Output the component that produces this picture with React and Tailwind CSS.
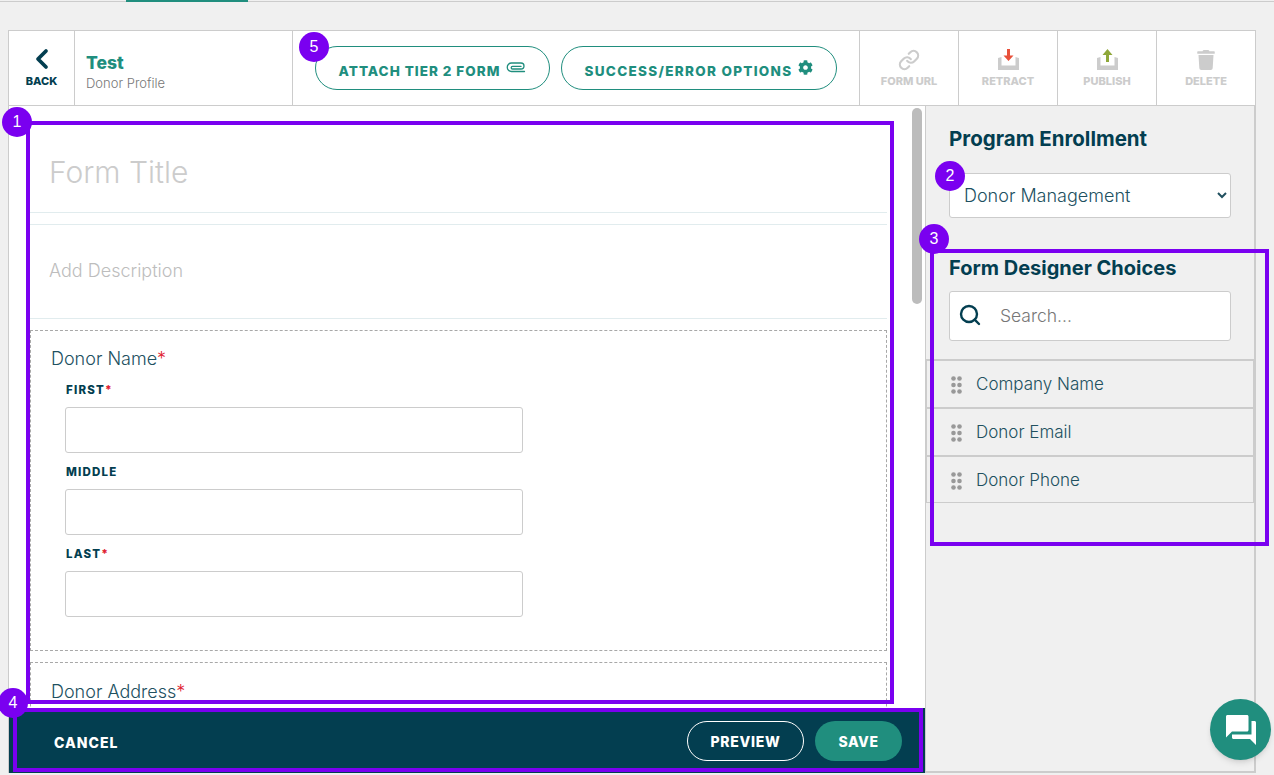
import { ChevronLeft, Search, Link } from 'lucide-react';
import { FaCog, FaTrash } from 'react-icons/fa';
import { MdQuestionAnswer } from 'react-icons/md';

const PaperclipIcon = () => (
  <svg width="20" height="12" viewBox="0 0 20 12" fill="none" stroke="currentColor" strokeWidth="1.3" strokeLinecap="round" className="-mt-[8px]">
    <path d="M18.5 9.5H5.500a4 4 0 0 1 0-8.500h9.500a3 3 0 0 1 0 6H6.500a1.200 1.200 0 0 1 0-2.600H15" />
  </svg>
);

const TrayIcon = ({ arrow, down }) => (
  <svg width="21" height="21" viewBox="0 0 21 21">
    <path d="M0 9l3.500-1v8.500h14V8l3.500 1v12H0z" fill="#cccccc" />
    {down ? (
      <path d="M9 0h3v6.500h3.500L10.500 12 5.500 6.500H9z" fill={arrow} />
    ) : (
      <path d="M9 13h3V6h3.500L10.500 0 5.500 6H9z" fill={arrow} />
    )}
  </svg>
);

const DragDots = () => (
  <svg width="11" height="18" viewBox="0 0 11 18" fill="#999999">
    <circle cx="2.500" cy="2.500" r="2.300" />
    <circle cx="8.500" cy="2.500" r="2.300" />
    <circle cx="2.500" cy="9" r="2.300" />
    <circle cx="8.500" cy="9" r="2.300" />
    <circle cx="2.500" cy="15.500" r="2.300" />
    <circle cx="8.500" cy="15.500" r="2.300" />
  </svg>
);

function ToolAction({ icon, label }) {
  return (
    <div className="w-[99px] flex flex-col items-center border-l border-[#cccccc] pt-[17px]">
      <div className="h-[23px] flex items-center justify-center">{icon}</div>
      <span className="mt-[3px] text-[11px] leading-[14px] font-extrabold text-[#cccccc]">{label}</span>
    </div>
  );
}

function NameField({ label, required }) {
  return (
    <div className="mb-[10px]">
      <div className="h-[18px] pl-px text-[11.500px] leading-[18px] font-extrabold tracking-[1.200px] text-[#033e50]">
        {label}
        {required && <span className="text-[#e0202f]">*</span>}
      </div>
      <input className="block mt-[8px] w-[458px] h-[46px] bg-white border border-[#cccccc] rounded-[3px]" />
    </div>
  );
}

function Choice({ label }) {
  return (
    <div className="h-[48px] flex items-center pl-[24px] pt-[1px] last:pt-[2px] border-x border-t-2 last:border-b border-[#cccccc]">
      <DragDots />
      <span className="ml-[14px] text-[17px] font-light text-[#21505f]">{label}</span>
    </div>
  );
}

function Badge({ n, className }) {
  return (
    <div className={`absolute w-[30px] h-[30px] rounded-full bg-[#7a00f0] text-white text-[16px] flex items-center justify-center font-['Liberation_Sans',sans-serif] ${className}`}>
      {n}
    </div>
  );
}

export default function App() {
  return (
    <div className="relative w-[1274px] h-[775px] overflow-hidden bg-[#f0f0f0] font-['Inter',sans-serif]">
      {/* top tab strip */}
      <div className="flex h-[2px] border-b border-[#cccccc]">
        <div className="w-[126px]" />
        <div className="w-[122px] h-[2px] bg-[#208e7e]" />
      </div>

      <div className="pl-[8px] pt-[28px] w-[1256px]">
        {/* toolbar */}
        <div className="flex h-[76px] bg-white border border-[#cccccc]">
          <div className="w-[65px] flex flex-col items-center pt-[12px] text-[#033e50]">
            <ChevronLeft size={32} strokeWidth={2.800} />
            <span className="text-[11px] leading-[14px] font-extrabold mt-[-1px]">BACK</span>
          </div>
          <div className="w-[218px] border-l border-[#cccccc] pl-[11px] pt-[21px]">
            <div className="text-[17.500px] leading-[22px] font-extrabold text-[#208e7e]">Test</div>
            <div className="text-[13px] leading-[18px] font-light text-[#777777]">Donor Profile</div>
          </div>
          <div className="flex-1 border-l border-[#cccccc] pl-[22px] pt-[15px] flex gap-[11px]">
            <button className="w-[235px] h-[44px] pt-[7px] rounded-[22px] border border-[#208e7e] flex items-center justify-center gap-[6px] text-[13.500px] font-extrabold tracking-[1px] text-[#208e7e]">
              ATTACH TIER 2 FORM <PaperclipIcon />
            </button>
            <button className="w-[276px] h-[44px] pt-[7px] rounded-[22px] border border-[#208e7e] flex items-center justify-center gap-[6px] text-[13.500px] font-extrabold tracking-[1.300px] text-[#208e7e]">
              SUCCESS/ERROR OPTIONS <FaCog size={15} className="-mt-[8px]" />
            </button>
          </div>
          <ToolAction label="FORM URL" icon={<Link size={22} strokeWidth={2.400} className="text-[#cccccc]" />} />
          <ToolAction label="RETRACT" icon={<TrayIcon arrow="#e8503a" down />} />
          <ToolAction label="PUBLISH" icon={<TrayIcon arrow="#8fa83a" />} />
          <ToolAction label="DELETE" icon={<FaTrash size={20} className="text-[#cccccc]" />} />
        </div>

        <div className="flex h-[667px]">
          {/* form column */}
          <div className="w-[917px] flex flex-col border-l border-[#cccccc]">
            <div className="h-[602px] bg-white overflow-hidden flex pl-[21px]">
              <div className="w-[857px] shrink-0">
                <div className="h-[107px] pt-[27px] pl-[19px] flex items-center border-b border-[#e1ecee] text-[30px] font-light text-[#cccccc]">
                  Form Title
                </div>
                <div className="mt-[11px] h-[95px] pb-[3px] flex items-center pl-[19px] border-y border-[#e1ecee] text-[18px] font-light text-[#bdbdbd]">
                  Add Description
                </div>
                <div className="mt-[11px] h-[321px] border border-dashed border-[#a8a8a8] pl-[20px] pt-[17px]">
                  <div className="text-[18px] leading-[22px] font-light text-[#21505f]">
                    Donor Name<span className="text-[#e0202f]">*</span>
                  </div>
                  <div className="pl-[14px] mt-[11px]">
                    <NameField label="FIRST" required />
                    <NameField label="MIDDLE" />
                    <NameField label="LAST" required />
                  </div>
                </div>
                <div className="mt-[11px] h-[60px] border border-dashed border-[#a8a8a8] pl-[20px] pt-[18px]">
                  <div className="text-[18px] leading-[22px] font-light text-[#21505f]">
                    Donor Address<span className="text-[#e0202f]">*</span>
                  </div>
                </div>
              </div>
              {/* scrollbar */}
              <div className="ml-[25px] mt-[2px] w-[10px] h-[196px] rounded-[5px] bg-[#bcbcbc]" />
            </div>
            <div className="h-[65px] bg-[#033e50] flex items-center pl-[45px] pr-[23px]">
              <span className="text-[14px] font-extrabold tracking-[1px] text-white pt-[4px]">CANCEL</span>
              <button className="ml-auto w-[117px] h-[40px] pt-[2px] rounded-[20px] border border-white text-[14px] font-extrabold tracking-[0.7px] text-white">
                PREVIEW
              </button>
              <button className="ml-[11px] w-[87px] h-[40px] pt-[2px] rounded-[20px] bg-[#208e7e] text-[14px] font-extrabold tracking-[0.5px] text-white">
                SAVE
              </button>
            </div>
          </div>

          {/* side panel */}
          <div className="flex-1 border-l border-r-2 border-[#cccccc] border-b-2">
            <div className="pl-[23px] pr-[23px] pt-[20px]">
              <h2 className="text-[20.500px] leading-[26px] font-bold text-[#033e50]">Program Enrollment</h2>
              <select className="block mt-[21px] w-[282px] h-[45px] pl-[10px] pr-[6px] bg-white border border-[#cccccc] rounded-[3px] text-[18px] font-light text-[#21505f]">
                <option>Donor Management</option>
              </select>
              <h2 className="mt-[37px] text-[20px] leading-[26px] font-bold text-[#033e50]">Form Designer Choices</h2>
              <div className="mt-[10px] w-[282px] h-[50px] bg-white border border-[#cccccc] rounded-[3px] flex items-center pl-[8px]">
                <Search size={24} strokeWidth={2.400} className="text-[#033e50] shrink-0 -mt-[3px]" />
                <input placeholder="Search..." className="ml-[18px] mt-[1px] w-[200px] text-[17.500px] font-light outline-none placeholder:text-[#777777]" />
              </div>
            </div>
            <div className="mt-[18px]">
              <Choice label="Company Name" />
              <Choice label="Donor Email" />
              <Choice label="Donor Phone" />
            </div>
          </div>
        </div>
      </div>

      {/* annotation overlays */}
      <div className="absolute left-[26px] top-[121px] w-[868px] h-[583px] border-4 border-[#7a00f0]" />
      <div className="absolute left-[930px] top-[249px] w-[339px] h-[297px] border-4 border-[#7a00f0]" />
      <div className="absolute left-[13px] top-[708px] w-[910px] h-[64px] border-4 border-[#7a00f0]" />
      <Badge n="1" className="left-[2px] top-[107px]" />
      <Badge n="2" className="left-[935px] top-[161px]" />
      <Badge n="3" className="left-[919px] top-[224px]" />
      <Badge n="4" className="-left-[2px] top-[688px]" />
      <Badge n="5" className="left-[299px] top-[32px]" />

      {/* chat bubble */}
      <div className="absolute left-[1210px] top-[699px] w-[61px] h-[61px] rounded-full bg-[#208e7e] shadow-md flex items-center justify-center">
        <MdQuestionAnswer size={36} className="text-white" />
      </div>
    </div>
  );
}
